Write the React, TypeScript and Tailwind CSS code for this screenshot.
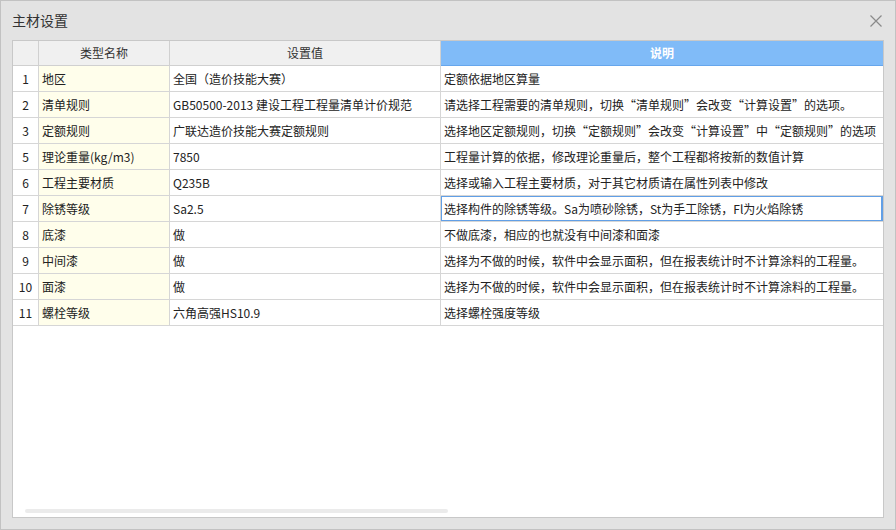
const rows: [string, string, string, string][] = [
  ['1', '地区', '全国（造价技能大赛）', '定额依据地区算量'],
  ['2', '清单规则', 'GB50500-2013 建设工程工程量清单计价规范', '请选择工程需要的清单规则，切换“清单规则”会改变“计算设置”的选项。'],
  ['3', '定额规则', '广联达造价技能大赛定额规则', '选择地区定额规则，切换“定额规则”会改变“计算设置”中“定额规则”的选项'],
  ['5', '理论重量(kg/m3)', '7850', '工程量计算的依据，修改理论重量后，整个工程都将按新的数值计算'],
  ['6', '工程主要材质', 'Q235B', '选择或输入工程主要材质，对于其它材质请在属性列表中修改'],
  ['7', '除锈等级', 'Sa2.5', '选择构件的除锈等级。Sa为喷砂除锈，St为手工除锈，Fl为火焰除锈'],
  ['8', '底漆', '做', '不做底漆，相应的也就没有中间漆和面漆'],
  ['9', '中间漆', '做', '选择为不做的时候，软件中会显示面积，但在报表统计时不计算涂料的工程量。'],
  ['10', '面漆', '做', '选择为不做的时候，软件中会显示面积，但在报表统计时不计算涂料的工程量。'],
  ['11', '螺栓等级', '六角高强HS10.9', '选择螺栓强度等级'],
];

export default function App() {
  return (
    <div
      className="w-[896px] h-[530px] border border-[#c2c2c2] bg-[#e3e3e3] flex flex-col text-[#222]"
      style={{ fontFamily: '"Microsoft YaHei", "Noto Sans CJK SC", "Noto Sans", sans-serif' }}
    >
      <div className="h-[39px] flex items-center justify-between pl-[11px] pr-[13px]">
        <span className="text-[14px] text-[#333]">主材设置</span>
        <svg width="12" height="12" viewBox="0 0 12 12" className="text-[#8a8a8a]">
          <path d="M0.5 0.5 L11.5 11.5 M11.5 0.5 L0.5 11.5" stroke="currentColor" strokeWidth="1.2" fill="none" />
        </svg>
      </div>
      <div className="mx-[11px] mb-[11px] flex-1 border border-[#c8c8c8] bg-white flex flex-col text-[12px] overflow-hidden">
        <div className="flex h-[25px] shrink-0">
          <div className="w-[26px] shrink-0 bg-[#f0f0f0] border-r border-b border-[#d0d0d0]" />
          <div className="w-[131px] shrink-0 bg-[#f0f0f0] border-r border-b border-[#d0d0d0] flex items-center justify-center text-[#333]">类型名称</div>
          <div className="w-[271px] shrink-0 bg-[#f0f0f0] border-r border-b border-[#d0d0d0] flex items-center justify-center text-[#333]">设置值</div>
          <div className="flex-1 bg-[#80bbf8] border-b border-[#66a6ec] flex items-center justify-center text-white font-bold">说明</div>
        </div>
        {rows.map(([n, name, val, desc]) => (
          <div key={n} className="flex h-[26px] shrink-0">
            <div className="w-[26px] shrink-0 border-r border-b border-[#d6d6d6] flex items-center justify-center">{n}</div>
            <div className="w-[131px] shrink-0 bg-[#fffeeb] border-r border-b border-[#d6d6d6] flex items-center pl-[3px] whitespace-nowrap overflow-hidden">{name}</div>
            <div className="w-[271px] shrink-0 border-r border-b border-[#d6d6d6] flex items-center pl-[3px] whitespace-nowrap overflow-hidden">{val}</div>
            <div className="relative flex-1 min-w-0 border-b border-[#d6d6d6] flex items-center pl-[3px] whitespace-nowrap overflow-hidden">
              {desc}
              {n === '7' && (
                <div className="absolute -top-px -left-px right-0 bottom-[-1px] border-2 border-[#619fe6]" />
              )}
            </div>
          </div>
        ))}
        <div className="flex-1" />
        <div className="h-[8px] shrink-0 pl-[12px]">
          <div className="w-[423px] h-[4px] rounded-full bg-[#ebebeb]" />
        </div>
      </div>
    </div>
  );
}
